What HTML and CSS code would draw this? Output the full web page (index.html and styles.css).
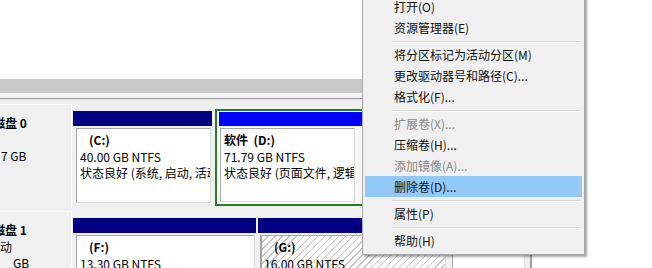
FILE: index.html
```html
<!DOCTYPE html>
<html lang="zh-CN">
<head>
<meta charset="utf-8">
<title>磁盘管理</title>
<link rel="stylesheet" href="styles.css">
</head>
<body>
<div class="window">
  <div class="blank"></div>
  <div class="band"></div>
  <div class="band2"></div>
  <div class="disks">
    <div class="disk">
      <div class="label">
        <div class="name n0">磁盘 0</div>
        <div class="line">&nbsp;</div>
        <div class="line">7 GB</div>
      </div>
      <div class="parts">
        <div class="part part-c">
          <div class="bar navy"></div>
          <div class="box">
            <div class="vol">(C:)</div>
            <div class="txt">40.00 GB NTFS</div>
            <div class="txt">状态良好 (系统, 启动, 活动, 故障转储, 主分区)</div>
          </div>
        </div>
        <div class="part part-d">
          <div class="bar blue"></div>
          <div class="box">
            <div class="vol vol-d">软件&nbsp; (D:)</div>
            <div class="txt">71.79 GB NTFS</div>
            <div class="txt">状态良好 (页面文件, 逻辑驱动器)</div>
          </div>
        </div>
      </div>
    </div>
    <div class="disk">
      <div class="label">
        <div class="name n0">磁盘 1</div>
        <div class="line l-move">可移动</div>
        <div class="line l-gb">GB</div>
      </div>
      <div class="parts">
        <div class="part part-f">
          <div class="bar navy"></div>
          <div class="box">
            <div class="vol">(F:)</div>
            <div class="txt">13.30 GB NTFS</div>
          </div>
        </div>
        <div class="part part-g">
          <div class="bar navy"></div>
          <div class="box hatch">
            <div class="vol">(G:)</div>
            <div class="txt">16.00 GB NTFS</div>
          </div>
        </div>
        <div class="part part-h">
          <div class="bar navy"></div>
          <div class="box"></div>
        </div>
      </div>
    </div>
  </div>
</div>

<div class="menu">
  <div class="item">打开(O)</div>
  <div class="item">资源管理器(E)</div>
  <div class="sep"></div>
  <div class="item">将分区标记为活动分区(M)</div>
  <div class="item">更改驱动器号和路径(C)...</div>
  <div class="item">格式化(F)...</div>
  <div class="sep"></div>
  <div class="item disabled">扩展卷(X)...</div>
  <div class="item">压缩卷(H)...</div>
  <div class="item disabled">添加镜像(A)...</div>
  <div class="item hover">删除卷(D)...</div>
  <div class="sep"></div>
  <div class="item">属性(P)</div>
  <div class="sep"></div>
  <div class="item">帮助(H)</div>
</div>
</body>
</html>
```

FILE: styles.css
```css
html, body {
  margin: 0;
  padding: 0;
}
body {
  width: 652px;
  height: 268px;
  overflow: hidden;
  background: #ffffff;
  position: relative;
  font-family: "Noto Sans CJK SC", "Noto Sans", sans-serif;
  font-size: 12px;
  color: #000;
}
.window {
  width: 530px;
  height: 268px;
  overflow: hidden;
  border-right: 2px solid #a0a0a0;
  display: flex;
  flex-direction: column;
}
.window > div {
  flex-shrink: 0;
}
.blank {
  height: 79px;
  background: #ffffff;
}
.band {
  height: 14px;
  background: #c9c9c9;
}
.band2 {
  height: 5px;
  background: #f3f3f3;
  border-bottom: 1px solid #9c9c9c;
}
.disks {
  flex: 1 0 auto;
  background: #f0f0f0;
  border-top: 1px solid #e4e4e4;
  padding-top: 4px;
  display: flex;
  flex-direction: column;
  gap: 3px;
}
.disk {
  height: 104px;
  display: flex;
  flex-shrink: 0;
}
.label {
  width: 72px;
  border-right: 1px solid #ffffff;
  border-top: 1px solid #fafafa;
  background: #f0f0f0;
  overflow: hidden;
  padding-top: 10px;
  box-sizing: border-box;
  line-height: 16.5px;
  white-space: nowrap;
}
.name {
  font-weight: bold;
  margin-left: -7px;
}
.line {
  margin-left: 1px;
}
.l-move {
  margin-left: -24px;
}
.l-gb {
  margin-left: 13px;
}
.parts {
  display: flex;
  margin-left: 1px;
  padding-top: 7px;
  gap: 3px;
  align-items: flex-start;
}
.part {
  display: flex;
  flex-direction: column;
  flex-shrink: 0;
}
.bar {
  height: 15px;
}
.navy { background: #000080; }
.blue { background: #0000ff; height: 14px; }
.box {
  background: #ffffff;
  border: 1px solid #a8a8a8;
  border-right-color: #dcdcdc;
  border-bottom-color: #dcdcdc;
  margin: 2px 1px 0 3px;
  padding: 3px 0 0 3px;
  line-height: 16.5px;
  white-space: nowrap;
  overflow: hidden;
  box-sizing: border-box;
}
.vol {
  font-weight: bold;
  padding-left: 9px;
}
.vol-d {
  padding-left: 0;
}
.part-c { width: 139px; }
.part-c .box { height: 75px; }
.part-d {
  width: 156px;
  box-sizing: border-box;
  margin-top: -2px;
  border: 2px solid #23802a;
  padding: 1px 2px 2px 2px;
  background: #f7f7f7;
}
.part-d .box { height: 74px; width: 135px; margin-left: 1px; }
.part-f { width: 183px; margin-right: -1px; }
.part-f .box { height: 40px; }
.part-g { width: 189px; }
.part-g .box {
  height: 40px;
  margin-left: 2px;
  border-left: 2px solid #a4a4a4;
  padding-left: 2px;
}
.part-g .box .vol { padding-left: 10px; }
.hatch {
  background: repeating-linear-gradient(135deg, #ffffff 0px, #ffffff 4px, #c4c4c4 4px, #c4c4c4 5px);
}
.part-h { width: 76px; }
.part-h .box { height: 40px; margin-left: 2px; }

.menu {
  position: absolute;
  left: 362px;
  top: -7px;
  width: 217px;
  background: #f0f0f0;
  border: 1px solid #a7a7a7;
  box-shadow: 2px 2px 2px rgba(0, 0, 0, 0.35);
  padding: 2px 2px 3px 2px;
}
.item {
  height: 21px;
  line-height: 21px;
  padding-left: 29px;
  white-space: nowrap;
  color: #111;
}
.item.disabled {
  color: #8a8a8a;
}
.item.hover {
  background: #91c9f7;
}
.sep {
  height: 1px;
  background: #d7d7d7;
  border-bottom: 1px solid #ffffff;
  margin: 3px 1px 1px 27px;
}
```
